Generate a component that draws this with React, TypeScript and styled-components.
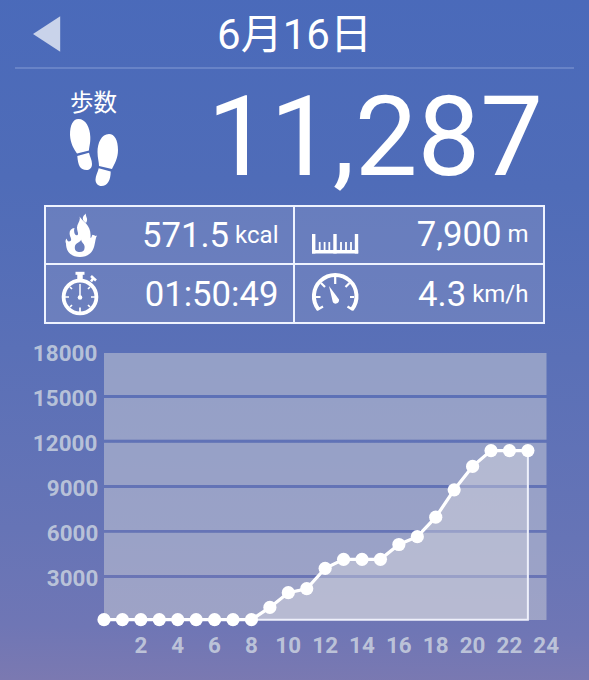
import React from "react";
import styled, { createGlobalStyle } from "styled-components";

const GlobalStyle = createGlobalStyle`
  body { margin: 0; }
  * { box-sizing: border-box; }
`;

const Screen = styled.main`
  width: 589px;
  height: 680px;
  overflow: hidden;
  display: flex;
  flex-direction: column;
  color: #fff;
  font-family: Roboto, "Noto Sans CJK JP", sans-serif;
  background: linear-gradient(181deg, #4a6aba 0%, #4f6cb8 27%, #5a70b7 52%, #6674b6 78%, #6f76b5 92%, #7b79b1 100%);
`;

const Header = styled.header`
  height: 69px;
  margin: 0 15px;
  padding: 0 18px;
  display: grid;
  grid-template-columns: 28px 1fr 28px;
  align-items: center;
  border-bottom: 2px solid #6883c7;
`;

const BackButton = styled.button`
  width: 28px;
  height: 36px;
  padding: 0;
  border: 0;
  background: none;
  display: block;
`;

const DateTitle = styled.h1`
  margin: 3px 0 0;
  font-size: 42px;
  line-height: 60px;
  font-weight: 400;
  text-align: center;
  white-space: nowrap;
`;

const Steps = styled.section`
  height: 136px;
  padding: 0 46px 0 69px;
  display: flex;
  justify-content: space-between;
`;

const StepsLabel = styled.div`
  width: 50px;
  padding-top: 20px;
  font-size: 23.5px;
  line-height: 29px;
  white-space: nowrap;
  svg { display: block; }
`;

const StepsName = styled.div`
  padding-left: 1px;
`;

const StepCount = styled.div`
  font-size: 111.7px;
  line-height: 132px;
  padding-top: 2px;
`;

const Stats = styled.section`
  width: 501px;
  height: 119px;
  margin-left: 44px;
  flex: none;
  display: grid;
  grid-template-columns: 248px 248px;
  grid-template-rows: 57px 56px;
  gap: 2px;
  padding: 2px;
  background:
    linear-gradient(#eef3ff, #eef3ff) 249px 0 / 2px 100% no-repeat,
    linear-gradient(#eef3ff, #eef3ff) 0 58px / 100% 2px no-repeat,
    rgba(132, 147, 198, 0.45);
  box-shadow: inset 0 0 0 2px #eef3ff;
`;

const Stat = styled.div`
  display: flex;
  align-items: center;
  justify-content: space-between;
  padding: 0 15.5px 0 14px;
  svg { display: block; flex: none; }
`;

const Reading = styled.div<{ $lift: number }>`
  display: flex;
  align-items: center;
  gap: 6px;
  font-size: 34.7px;
  line-height: 52px;
  padding-bottom: ${(p) => p.$lift}px;
`;

const Unit = styled.span`
  font-size: 24px;
`;

const Chart = styled.svg`
  display: block;
  flex: none;
  margin-top: 16px;
`;

const AxisText = styled.text`
  font: 700 22.4px Roboto, sans-serif;
  letter-spacing: 0.1px;
  fill: rgba(212, 220, 228, 0.77);
`;

const Footprints = () => (
  <svg width="50" height="70" viewBox="0 0 50 70" fill="#fff">
    <path d="M1 17C1 7 4 1 9.500 1C16.500 1 21 9 21.300 19C21.500 26 20 29 20 32.500L8 35.500C5 31 1.500 26 1 17Z" />
    <path d="M8.300 38L20 34.800C20.800 38.500 23 42 23 46C23 50 20.500 52 17.500 52C11 52 9 47 8.300 38Z" />
    <path d="M49 32C49 22 45.500 16 40 16C32.500 16 28.500 25 28.500 34C28.500 40 30 44 30 48L43 51C45.500 46 49 40 49 32Z" />
    <path d="M29.700 50.200L41.700 53.400C41.700 62 38.500 68 32.500 68C29 68 26.500 65.500 26.500 61.500C26.500 57.500 29 54 29.700 50.200Z" />
  </svg>
);

const Flame = () => (
  <svg width="46" height="50" viewBox="0 0 46 50" fill="#fff">
    <path fillRule="evenodd" d="M19.500 5.500C23 11 31.500 14 30.500 26C30.500 28 31.500 26.500 32 24.500C33 22.500 34.500 26 37 24.500C35.500 27 35.500 30 34.500 34C33 41.500 28 46 20 46C10.500 46 6 40 6 32.500C5.500 31 5 29.500 6.500 27.500C7.500 30.500 8.500 31 10.500 30C12 28.500 10.500 27 9.800 24C9 20.500 10.500 17.500 14.500 17C13 22 16 25.500 17.500 24C19 22.500 17 20.500 17 16.500C17 12.500 21 10 19.500 5.500ZM21 28.500C21.500 31 14.800 31.500 14.800 36.500C14.800 40 17 41 19.500 41C23.500 41 25 39 24.500 35C24 32.500 21.500 31.500 21 28.500Z" />
    <path d="M26 2.500C25 5.500 29 7.500 26 12C21.500 9 22 5.500 26 2.500Z" />
  </svg>
);

const Stopwatch = () => (
  <svg width="46" height="50" viewBox="0 0 46 50" fill="none" stroke="#fff">
    <circle cx="20" cy="28" r="16.400" strokeWidth="3.800" />
    <path d="M15.500 4.300H24.500" strokeWidth="3" />
    <path d="M31 7L36 11.500" strokeWidth="2.600" />
    <path d="M33.500 9L31 12.500" strokeWidth="2.600" />
    <path d="M20 5V11" strokeWidth="5.500" />
    <path d="M20 15V28" strokeWidth="1.500" />
    <path d="M20 38.500V43M5 28H9M31 28H35M12 20L10 18M28 20L30 18M12 36L10 38M28 36L30 38" strokeWidth="1.700" />
    <circle cx="20" cy="28.500" r="2.300" fill="#fff" stroke="none" />
  </svg>
);

const Ruler = () => (
  <svg width="50" height="50" viewBox="-1 1 50 50" fill="none" stroke="#fff">
    <path d="M2.700 24V43.500M24 24V43.500M45.500 24V43.500" strokeWidth="3.400" />
    <path d="M1 41.800H47.200" strokeWidth="3.400" />
    <path d="M8.700 32V41M13.600 32V41M18.300 32V41M30 32V41M35 32V41M40 32V41" strokeWidth="1.800" />
  </svg>
);

const Gauge = () => (
  <svg width="50" height="50" viewBox="-1 0 50 50" fill="none" stroke="#fff">
    <path d="M7.500 40.500A21.300 21.300 0 1 1 40.900 40.500" strokeWidth="4" />
    <path d="M24.200 8V15M5 28H9.500M39 28H43M10 14L14 18M38.500 14L34.500 18M6 41L12 37.500M42 41L36.500 37.500" strokeWidth="2.200" />
    <path d="M18 17L28 30.500C28.700 34 23.800 36.500 21.800 33Z" fill="#fff" stroke="none" />
  </svg>
);

const hourX = (hour: number) => 104 + hour * 18.43;

const levels = [
  279.7, 279.7, 279.7, 279.7, 279.7, 279.7, 279.7, 279.7, 279.7, 267.4, 252.7, 248.7,
  228.3, 219.3, 219.3, 219.3, 204.5, 196.7, 177.2, 149.8, 126.4, 110.6, 110.6, 110.6,
];

const bands = [
  { top: 13, height: 42 },
  { top: 58, height: 41.7 },
  { top: 102.8, height: 42.2 },
  { top: 148, height: 42 },
  { top: 192.8, height: 42.2 },
  { top: 238, height: 42 },
];

const stepTicks = ["18000", "15000", "12000", "9000", "6000", "3000"];
const hourTicks = [2, 4, 6, 8, 10, 12, 14, 16, 18, 20, 22, 24];

const StepChart = () => {
  const line = levels.map((y, hour) => `${hourX(hour)},${y}`).join(" ");
  return (
    <Chart width="589" height="340" viewBox="0 0 589 340">
      {bands.map((band) => (
        <rect key={band.top} x="104" y={band.top} width="442.500" height={band.height} fill="rgba(206,208,215,0.5)" />
      ))}
      <polygon
        points={`${line} ${hourX(23)},279.7`}
        fill="rgba(220,220,226,0.42)"
        stroke="#eef0fb"
        strokeWidth="2"
      />
      <polyline points={line} fill="none" stroke="#fff" strokeWidth="3.200" />
      {levels.map((y, hour) => (
        <circle key={hour} cx={hourX(hour)} cy={y} r="6.600" fill="#fff" />
      ))}
      {stepTicks.map((tick, i) => (
        <AxisText key={tick} x={i < 3 ? 97.5 : 98.5} y={21.2 + i * 45} textAnchor="end">{tick}</AxisText>
      ))}
      {hourTicks.map((tick) => (
        <AxisText key={tick} x={hourX(tick)} y="313.300" textAnchor="middle">{tick}</AxisText>
      ))}
    </Chart>
  );
};

export default function App() {
  return (
    <Screen>
      <GlobalStyle />
      <Header>
        <BackButton aria-label="前の日">
          <svg width="28" height="36" viewBox="0 0 28 36">
            <path d="M0 18L27.200 0.300V35.700Z" fill="#c9d3ea" />
          </svg>
        </BackButton>
        <DateTitle>6月16日</DateTitle>
      </Header>
      <Steps>
        <StepsLabel>
          <StepsName>歩数</StepsName>
          <Footprints />
        </StepsLabel>
        <StepCount>11,287</StepCount>
      </Steps>
      <Stats>
        <Stat>
          <Flame />
          <Reading $lift={2}>571.5<Unit>kcal</Unit></Reading>
        </Stat>
        <Stat>
          <Ruler />
          <Reading $lift={3}>7,900<Unit>m</Unit></Reading>
        </Stat>
        <Stat>
          <Stopwatch />
          <Reading $lift={0}>01:50:49</Reading>
        </Stat>
        <Stat>
          <Gauge />
          <Reading $lift={0}>4.3<Unit>km/h</Unit></Reading>
        </Stat>
      </Stats>
      <StepChart />
    </Screen>
  );
}
